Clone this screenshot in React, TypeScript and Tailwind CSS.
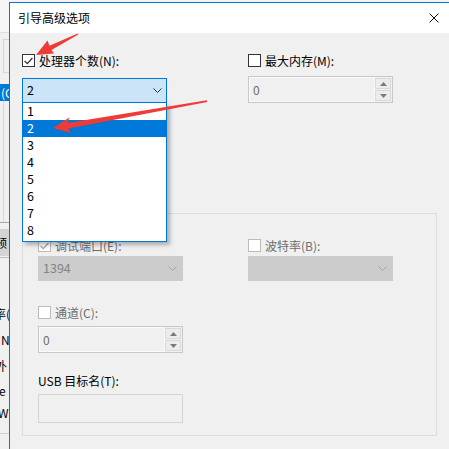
import React from "react";

const FONT = "font-['Noto_Sans_CJK_SC',sans-serif]";

function Check({ checked, disabled }: { checked?: boolean; disabled?: boolean }) {
  return (
    <span
      className={`w-[13px] h-[13px] shrink-0 border flex items-center justify-center ${
        disabled ? "border-[#bcbcbc] bg-white" : "border-[#333333] bg-white"
      } ${disabled && checked ? "bg-[#f4f4f4]" : ""}`}
    >
      {checked && (
        <svg width="9" height="8" viewBox="0 0 9 8">
          <path d="M0.6 4 L3.3 6.6 L8.4 1" fill="none" stroke={disabled ? "#a8a8a8" : "#333333"} strokeWidth="1.3" />
        </svg>
      )}
    </span>
  );
}

function Label({ text, checked, disabled, check = true }: { text: string; checked?: boolean; disabled?: boolean; check?: boolean }) {
  return (
    <div className="h-[13px] flex items-center gap-[4px]">
      {check && <Check checked={checked} disabled={disabled} />}
      <span className={`text-[12px] leading-none whitespace-nowrap ${disabled ? "text-[#6d6d6d]" : "text-black"}`}>{text}</span>
    </div>
  );
}

function Chevron({ color }: { color: string }) {
  return (
    <svg width="9" height="5" viewBox="0 0 9 5">
      <path d="M0.5 0.5 L4.5 4.5 L8.5 0.5" fill="none" stroke={color} strokeWidth="1" />
    </svg>
  );
}

function Spin({ value }: { value: string }) {
  return (
    <div className="w-[145px] h-[27px] border border-[#c8c8c8] bg-[#f0f0f0] flex">
      <div className="flex-1 border border-[#fafafa] flex items-center pl-[3px] text-[12px] text-[#6d6d6d]">{value}</div>
      <div className="w-[17px] flex flex-col py-[1px] pr-[1px] gap-[1px]">
        <div className="flex-1 border border-[#d9d9d9] bg-[#ececec] flex items-center justify-center">
          <svg width="7" height="4" viewBox="0 0 7 4"><path d="M0 4 L3.5 0 L7 4 Z" fill="#7a7a7a" /></svg>
        </div>
        <div className="flex-1 border border-[#d9d9d9] bg-[#ececec] flex items-center justify-center">
          <svg width="7" height="4" viewBox="0 0 7 4"><path d="M0 0 L3.5 4 L7 0 Z" fill="#7a7a7a" /></svg>
        </div>
      </div>
    </div>
  );
}

function DisabledCombo({ value }: { value: string }) {
  return (
    <div className="w-[145px] h-[25px] bg-[#cccccc] border border-[#cccccc] flex items-center justify-between pl-[4px] pr-[5px]">
      <span className="text-[12.5px] text-[#838383]">{value}</span>
      <Chevron color="#a2a2a2" />
    </div>
  );
}

function LeftStrip() {
  return (
    <div className="w-[9px] shrink-0 flex flex-col bg-[#f0f0f0] overflow-hidden text-[12px]">
      <div className="h-[33px] bg-[#f5f5f5] border-b border-[#dedede]" />
      <div className="h-[34px] mt-[6px] ml-[3px] border-l border-t border-b border-[#d6d6d6]" />
      <div className="h-[11px]" />
      <div className="h-[17px] bg-[#0078d7] text-white flex items-center whitespace-nowrap pl-[1px] leading-none">(C</div>
      <div className="h-[121px] ml-[3px] border-l border-[#d8d8d8]" />
      <div className="h-[7px] border-t border-[#a8a8a8]" />
      <div className="h-[27px] bg-[#d4d4d4] flex items-center whitespace-nowrap -ml-[5px] leading-none">预</div>
      <div className="h-[44px] border-t border-[#bdbdbd] mt-[1px]" />
      <div className="h-[26px] flex items-center whitespace-nowrap -ml-[6px] leading-none">率(</div>
      <div className="h-[26px] flex items-center whitespace-nowrap pl-[1px] leading-none">N</div>
      <div className="h-[26px] flex items-center whitespace-nowrap -ml-[5px] leading-none">外</div>
      <div className="h-[24px] flex items-center whitespace-nowrap -ml-[1px] leading-none">e</div>
      <div className="h-[20px] flex items-center whitespace-nowrap -ml-[2px] leading-none">W</div>
      <div className="flex-1 border-t border-[#cfcfcf] mt-[10px]" />
    </div>
  );
}

export default function App() {
  const items = ["1", "2", "3", "4", "5", "6", "7", "8"];
  return (
    <div className={`relative w-[449px] h-[449px] overflow-hidden flex bg-[#f0f0f0] ${FONT}`}>
      <LeftStrip />

      <div className="flex-1 flex flex-col">
        <div className="h-[2px] bg-[#f4f4f4]" />
        <div className="flex-1 flex flex-col border-l border-t border-[#0078d7]">
          {/* title bar */}
          <div className="h-[30px] bg-white flex items-center justify-between pl-[8px] pr-[10px]">
            <span className="text-[12px] text-black">引导高级选项</span>
            <svg width="10" height="10" viewBox="0 0 10 10">
              <path d="M0.5 0.5 L9.5 9.5 M9.5 0.5 L0.5 9.5" stroke="#111" strokeWidth="1" />
            </svg>
          </div>

          {/* body */}
          <div className="flex-1 bg-[#f0f0f0] pl-[12px] pt-[21px] flex flex-col">
            <div className="flex gap-[81px]">
              <div className="w-[145px] flex flex-col">
                <Label text="处理器个数(N):" checked />
                <div className="mt-[11px] w-[145px] h-[25px] bg-[#cce4f7] border border-[#0078d7] flex items-center justify-between pl-[4px] pr-[4px]">
                  <span className="text-[12.5px] text-black">2</span>
                  <Chevron color="#333333" />
                </div>
              </div>
              <div className="w-[145px] flex flex-col">
                <Label text="最大内存(M):" />
                <div className="mt-[9px]">
                  <Spin value="0" />
                </div>
              </div>
            </div>

            {/* group box */}
            <div className="mt-[110px] w-[415px] h-[223px] border border-[#dcdcdc] pl-[15px] pt-[25px] flex flex-col">
              <div className="flex gap-[65px]">
                <div className="w-[145px] flex flex-col">
                  <Label text="调试端口(E):" checked disabled />
                  <div className="mt-[4px]">
                    <DisabledCombo value="1394" />
                  </div>
                </div>
                <div className="w-[145px] flex flex-col">
                  <Label text="波特率(B):" disabled />
                  <div className="mt-[4px]">
                    <DisabledCombo value="" />
                  </div>
                </div>
              </div>
              <div className="mt-[25px]">
                <Label text="通道(C):" disabled />
              </div>
              <div className="mt-[7px]">
                <Spin value="0" />
              </div>
              <div className="mt-[21px]">
                <Label text="USB 目标名(T):" check={false} />
              </div>
              <div className="mt-[7px] w-[145px] h-[29px] border border-[#d4d4d4] bg-[#f0f0f0]" />
            </div>
          </div>
        </div>
      </div>

      {/* open dropdown list */}
      <div className={`absolute left-[22px] top-[103px] w-[145px] h-[139px] bg-white border border-t-0 border-[#0078d7] shadow-[3px_3px_4px_rgba(0,0,0,0.28)] flex flex-col`}>
        {items.map((n) => (
          <div
            key={n}
            className={`h-[17px] flex items-center pl-[4px] text-[12.5px] ${n === "2" ? "bg-[#0078d7] text-white" : "text-black"}`}
          >
            {n}
          </div>
        ))}
      </div>

      {/* red annotation arrows */}
      <svg className="absolute left-0 top-0 pointer-events-none" width="449" height="449" viewBox="0 0 449 449">
        <polygon
          points="36,55 54,53.5 51.5,50 78.3,34.6 77.7,33.4 49.5,45.8 47.5,40.5"
          fill="#ef3b36"
        />
        <polygon
          points="53,128 71,133 68.3,128.4 207.2,102 206.8,100.2 67.6,123 69.3,117.5"
          fill="#ef3b36"
        />
      </svg>
    </div>
  );
}
